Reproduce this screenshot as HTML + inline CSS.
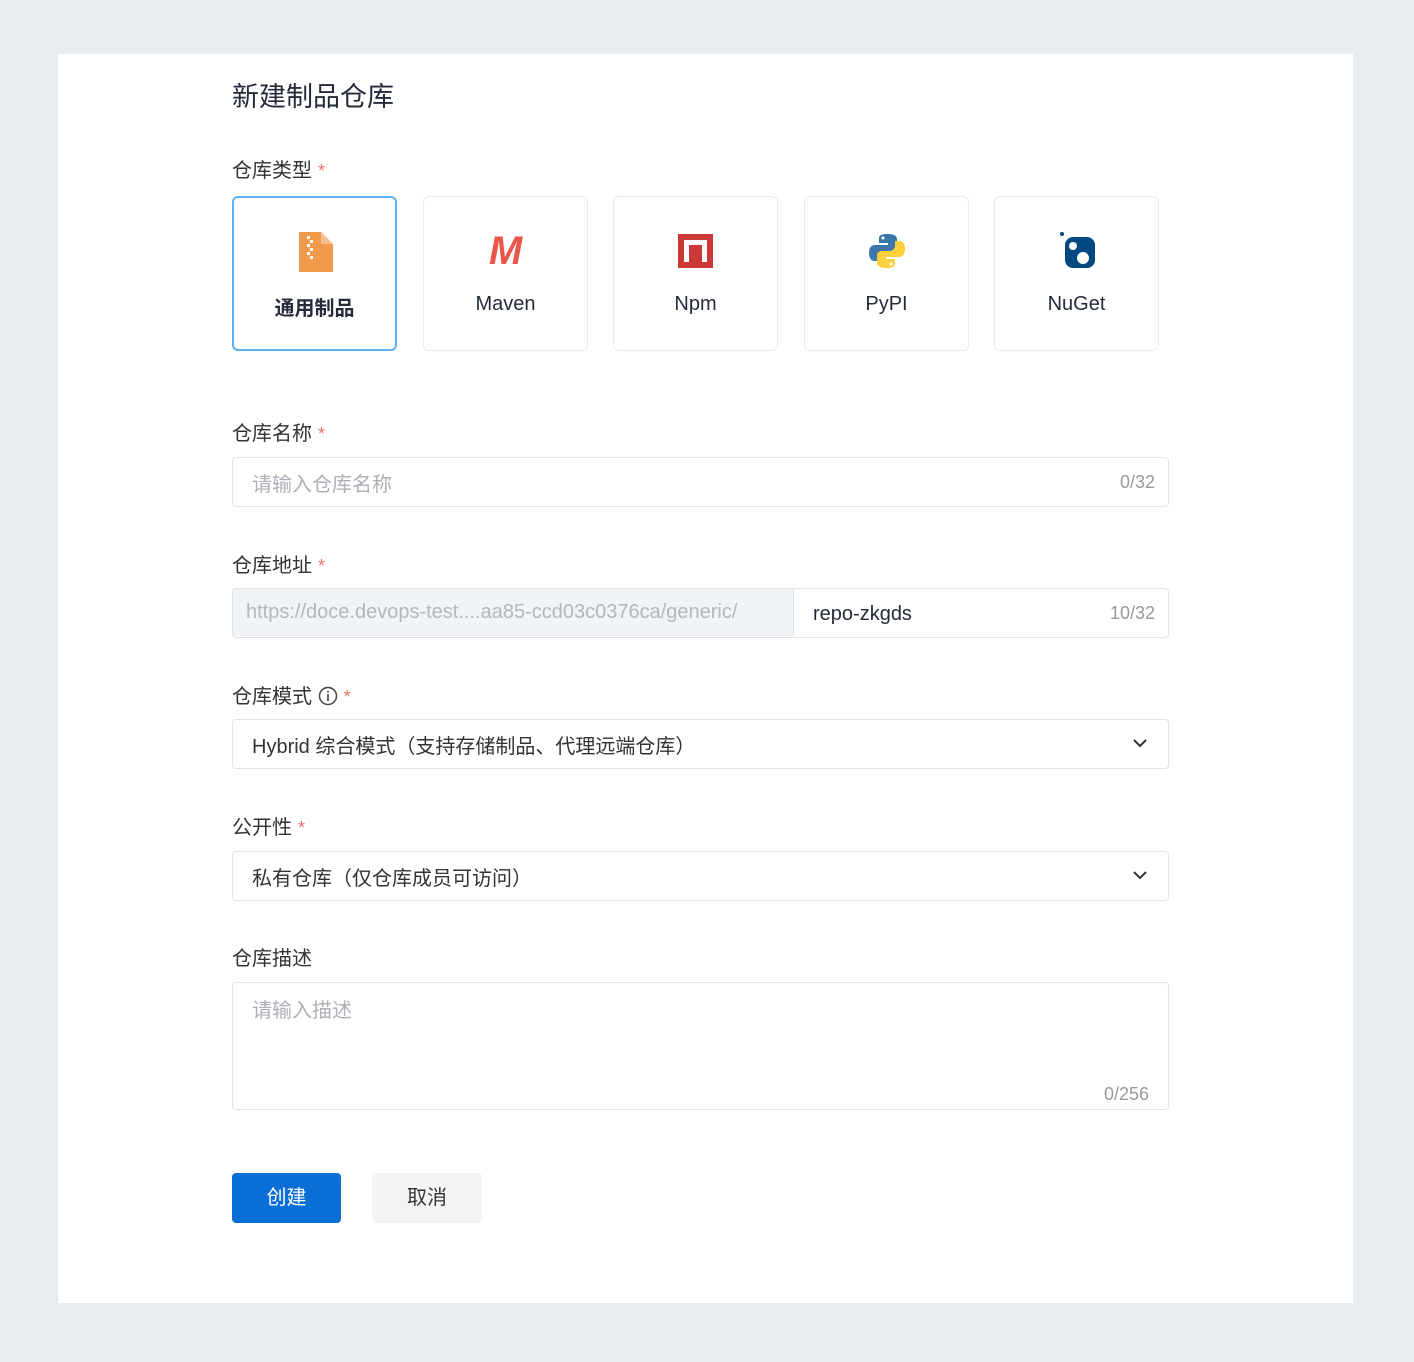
<!DOCTYPE html>
<html><head><meta charset="utf-8"><style>
*{box-sizing:border-box;margin:0;padding:0}
body{width:1414px;height:1362px;background:#e9ecef;font-family:"Liberation Sans","Noto Sans CJK SC",sans-serif;color:#252b3a;position:relative;overflow:hidden}
.card{position:absolute;left:58px;top:54px;width:1295px;height:1249px;background:#fff}
.abs{position:absolute}
.title{left:232px;top:75px;font-size:27px;color:#252b3a}
.lbl{left:232px;font-size:20px;color:#333;}
.lbl b{color:#f66f6a;font-weight:normal;margin-left:6px;font-size:18px}
.t{top:196px;width:165px;height:155px;border:1.5px solid #ebebeb;border-radius:6px;text-align:center}
.t .n{position:absolute;top:96px;left:0;right:0;font-size:20px;color:#252b3a}
.t.on{border:2px solid #5eb1f2}
.t .ic{position:absolute;left:63px;top:34px;width:38px;height:40px}
.inp{left:232px;width:937px;height:50px;border:1.5px solid #e1e3e6;border-radius:4px;font-size:20px}
.ph{color:#adb0b8}
.cnt{position:absolute;right:13px;top:14px;font-size:18px;color:#999}
.chev{position:absolute;right:20px;top:17px}
</style></head><body>
<div class="card"></div>
<div class="abs title">新建制品仓库</div>
<div class="abs lbl" style="top:154px">仓库类型<b>*</b></div>

<div class="abs t on" style="left:232px"><svg class="ic" viewBox="0 0 38 40"><path d="M2 0h22l12 12v28H2z" fill="#f29a4b"/><path d="M24 0v12h12z" fill="#f7c08e"/><g fill="#fff"><rect x="10" y="4" width="3" height="3"/><rect x="13" y="8" width="3" height="3"/><rect x="10" y="12" width="3" height="3"/><rect x="13" y="16" width="3" height="3"/><rect x="10" y="20" width="3" height="3"/><rect x="13" y="24" width="3" height="3"/></g></svg><div class="n" style="font-weight:bold;top:94px">通用制品</div></div>
<div class="abs t" style="left:423px"><div class="abs" style="left:0;right:0;top:32px;font-size:40px;font-weight:bold;font-style:italic;color:#e8574a">M</div><div class="n">Maven</div></div>
<div class="abs t" style="left:613px"><svg class="ic" viewBox="0 0 38 40" style="left:64px"><rect x="0" y="3" width="35" height="34" fill="#cb3837"/><path d="M6 9h23v22h-5V14h-6v17H6z" fill="#fff"/><rect x="11" y="14" width="7" height="17" fill="#cb3837"/></svg><div class="n">Npm</div></div>
<div class="abs t" style="left:804px"><svg class="ic" viewBox="0 0 38 40"><path d="M19 3c-8 0-8 3-8 5v4h9v2H7c-4 0-6 3-6 8s2 8 6 8h4v-5c0-3 3-5 6-5h8c2 0 4-2 4-4V8c0-3-3-5-10-5z" fill="#3b77a8"/><path d="M19 37c8 0 8-3 8-5v-4h-9v-2h13c4 0 6-3 6-8s-2-8-6-8h-4v5c0 3-3 5-6 5h-8c-2 0-4 2-4 4v8c0 3 3 5 10 5z" fill="#fdd13b"/><circle cx="15" cy="7" r="1.5" fill="#fff"/><circle cx="23" cy="33" r="1.5" fill="#fff"/></svg><div class="n">PyPI</div></div>
<div class="abs t" style="left:994px"><svg class="ic" viewBox="0 0 38 40"><circle cx="4" cy="3" r="2" fill="#004880"/><rect x="7" y="6" width="30" height="31" rx="8" fill="#004880"/><circle cx="15" cy="15" r="4" fill="#fff"/><circle cx="25" cy="27" r="6" fill="#fff"/></svg><div class="n">NuGet</div></div>

<div class="abs lbl" style="top:417px">仓库名称<b>*</b></div>
<div class="abs inp" style="top:457px"><span class="abs ph" style="left:19px;top:10px">请输入仓库名称</span><span class="cnt">0/32</span></div>

<div class="abs lbl" style="top:549px">仓库地址<b>*</b></div>
<div class="abs inp" style="top:588px;overflow:hidden"><div class="abs" style="left:0;top:0;width:561px;height:47px;background:#f1f4f7;border-right:1.5px solid #e1e3e6"><span class="abs" style="left:13px;top:12px;color:#b3b6bc">https://doce.devops-test....aa85-ccd03c0376ca/generic/</span></div><span class="abs" style="left:580px;top:14px">repo-zkgds</span><span class="cnt">10/32</span></div>

<div class="abs lbl" style="top:680px">仓库模式 <svg width="20" height="20" viewBox="0 0 20 20" style="vertical-align:-3px"><circle cx="10" cy="10" r="8.5" fill="none" stroke="#444" stroke-width="1.5"/><rect x="9.2" y="8" width="1.6" height="7" fill="#444"/><rect x="9.2" y="5" width="1.6" height="1.6" fill="#444"/></svg><b>*</b></div>
<div class="abs inp" style="top:719px"><span class="abs" style="left:19px;top:10px;color:#333">Hybrid 综合模式（支持存储制品、代理远端仓库）</span><svg class="chev" width="16" height="12" viewBox="0 0 16 12"><path d="M2 3l6 6 6-6" fill="none" stroke="#333" stroke-width="2"/></svg></div>

<div class="abs lbl" style="top:811px">公开性<b>*</b></div>
<div class="abs inp" style="top:851px"><span class="abs" style="left:19px;top:10px;color:#333">私有仓库（仅仓库成员可访问）</span><svg class="chev" width="16" height="12" viewBox="0 0 16 12"><path d="M2 3l6 6 6-6" fill="none" stroke="#333" stroke-width="2"/></svg></div>

<div class="abs lbl" style="top:942px">仓库描述</div>
<div class="abs inp" style="top:982px;height:128px"><span class="abs ph" style="left:19px;top:11px">请输入描述</span><span class="cnt" style="top:auto;bottom:4px;right:19px">0/256</span></div>

<div class="abs" style="left:232px;top:1173px;width:109px;height:50px;background:#0a6fd7;border-radius:4px;color:#fff;font-size:20px;text-align:center;line-height:50px">创建</div>
<div class="abs" style="left:372px;top:1173px;width:110px;height:50px;background:#f2f4f6;border-radius:4px;color:#333;font-size:20px;text-align:center;line-height:50px">取消</div>
</body></html>
